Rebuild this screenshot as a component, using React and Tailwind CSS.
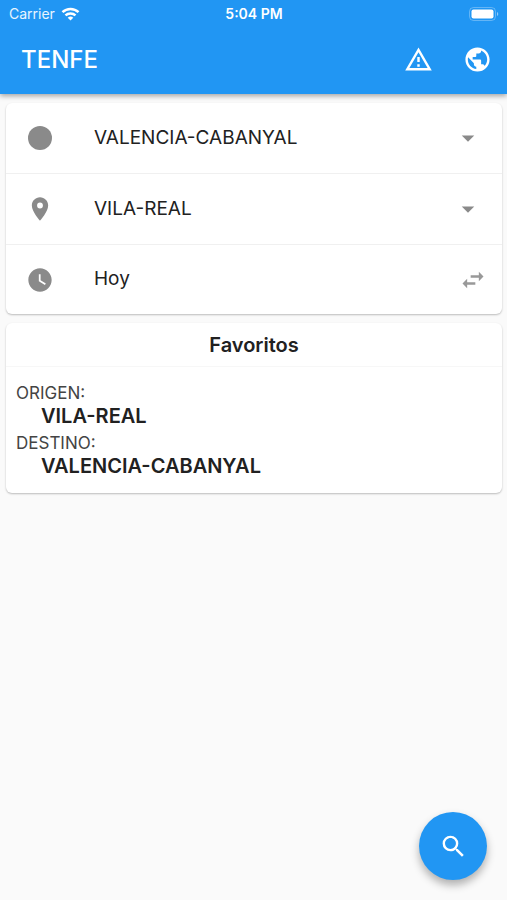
import { useState } from 'react';
import {
  MdArrowDropDown,
  MdLocationOn,
  MdPublic,
  MdSearch,
  MdSwapHoriz,
  MdWatchLater,
} from 'react-icons/md';

const stations = ['VALENCIA-CABANYAL', 'VILA-REAL'];

const favorites = [{ origin: 'VILA-REAL', destination: 'VALENCIA-CABANYAL' }];

function StatusBar() {
  return (
    <div className="grid h-[27px] grid-cols-3 items-center pl-[9px] pr-2 text-sm">
      <div className="flex items-center gap-1.5 text-white/90">
        <span>Carrier</span>
        <svg width="19" height="14" viewBox="0 0 18 14" fill="none" stroke="white">
          <path d="M1 5.2a11.5 11.5 0 0 1 16 0" strokeWidth="2.5" />
          <path d="M4 8.4a7.2 7.2 0 0 1 10 0" strokeWidth="2.5" />
          <path d="M9 13.6 6.2 10.8a4 4 0 0 1 5.6 0z" fill="white" stroke="none" />
        </svg>
      </div>
      <span className="text-center font-semibold">5:04 PM</span>
      <svg
        className="justify-self-end"
        width="30"
        height="14"
        viewBox="0 0 30 14"
        fill="none"
      >
        <rect x="0.5" y="0.5" width="26" height="13" rx="4" stroke="white" strokeOpacity="0.3" />
        <rect x="2.5" y="2.5" width="22" height="9" rx="2" fill="white" />
        <path d="M28 5v4a2.2 2.2 0 0 0 0-4z" fill="white" fillOpacity="0.5" />
      </svg>
    </div>
  );
}

function AppBar() {
  return (
    <header className="relative z-10 bg-[#2196f3] text-white shadow-[0_2px_5px_rgba(0,0,0,0.35)]">
      <StatusBar />
      <div className="flex h-[67px] items-center pb-0.5 pl-[21px] pr-[15px]">
        <h1 className="flex-1 text-2xl font-medium">TENFE</h1>
        <div className="flex items-center gap-[30px]">
          <button type="button" aria-label="Avisos">
            <svg width="29" height="29" viewBox="0 0 24 24" fill="currentColor">
              <path d="M12 5.99 19.53 19H4.47L12 5.99M12 2 1 21h22L12 2z" />
              <path d="M13 16h-2v2h2v-2zm0-6h-2v4h2v-4z" />
            </svg>
          </button>
          <button type="button" aria-label="Idioma">
            <MdPublic size={29} />
          </button>
        </div>
      </div>
    </header>
  );
}

function StationRow({ id, label, icon, value, onChange }) {
  return (
    <div className="flex h-[71px] items-center border-b border-[#f0f0f0] pl-5">
      <label htmlFor={id} aria-label={label} className="text-[#8a8a8a]">
        {icon}
      </label>
      <div className="grid min-w-0 flex-1 items-center pl-10 pr-[19px]">
        <select
          id={id}
          value={value}
          onChange={(e) => onChange(e.target.value)}
          className="col-start-1 row-start-1 h-12 w-full appearance-none bg-transparent text-[19px] outline-none"
        >
          {stations.map((station) => (
            <option key={station}>{station}</option>
          ))}
        </select>
        <MdArrowDropDown
          size={30}
          className="pointer-events-none col-start-1 row-start-1 justify-self-end text-[#8a8a8a]"
        />
      </div>
    </div>
  );
}

function SearchCard() {
  const [origin, setOrigin] = useState('VALENCIA-CABANYAL');
  const [destination, setDestination] = useState('VILA-REAL');

  function swapStations() {
    setOrigin(destination);
    setDestination(origin);
  }

  return (
    <section className="rounded-md bg-white shadow-[0_1px_2px_rgba(0,0,0,0.25)]">
      <StationRow
        id="origin"
        label="Origen"
        value={origin}
        onChange={setOrigin}
        icon={
          <svg width="28" height="28" viewBox="0 0 28 28" fill="currentColor">
            <circle cx="14" cy="14" r="12" />
          </svg>
        }
      />
      <StationRow
        id="destination"
        label="Destino"
        value={destination}
        onChange={setDestination}
        icon={<MdLocationOn size={28} />}
      />
      <div className="flex h-[69px] items-center pl-5 pr-[15px]">
        <MdWatchLater size={28} className="text-[#8a8a8a]" />
        <button type="button" className="ml-10 flex-1 text-left text-[19px]">
          Hoy
        </button>
        <button
          type="button"
          aria-label="Intercambiar estaciones"
          onClick={swapStations}
          className="text-[#999999]"
        >
          <MdSwapHoriz size={28} />
        </button>
      </div>
    </section>
  );
}

function FavoritesCard() {
  return (
    <section className="rounded-md bg-white shadow-[0_1px_2px_rgba(0,0,0,0.25)]">
      <h2 className="border-b border-[#f7f7f7] pt-0.5 text-center text-xl font-semibold leading-[41px]">
        Favoritos
      </h2>
      {favorites.map(({ origin, destination }) => (
        <dl key={origin + destination} className="px-2.5 pb-4 pt-3.5">
          <dt className="text-[17px] leading-6 text-[#444444]">ORIGEN:</dt>
          <dd className="pl-[25px] text-xl leading-[22px] font-semibold">{origin}</dd>
          <dt className="pt-1 text-[17px] leading-6 text-[#444444]">DESTINO:</dt>
          <dd className="pl-[25px] text-xl leading-[22px] font-semibold">{destination}</dd>
        </dl>
      ))}
    </section>
  );
}

export default function App() {
  return (
    <div className="min-h-screen bg-[#fafafa] font-['Inter',sans-serif] text-[#212121]">
      <AppBar />
      <main className="flex flex-col gap-[9px] pb-24 pl-1.5 pr-[5px] pt-[9px]">
        <SearchCard />
        <FavoritesCard />
      </main>
      <button
        type="button"
        aria-label="Buscar"
        className="fixed bottom-5 right-5 flex size-[68px] items-center justify-center rounded-full bg-[#2196f3] text-white shadow-[0_5px_9px_rgba(0,0,0,0.3)]"
      >
        <MdSearch size={29} />
      </button>
    </div>
  );
}
